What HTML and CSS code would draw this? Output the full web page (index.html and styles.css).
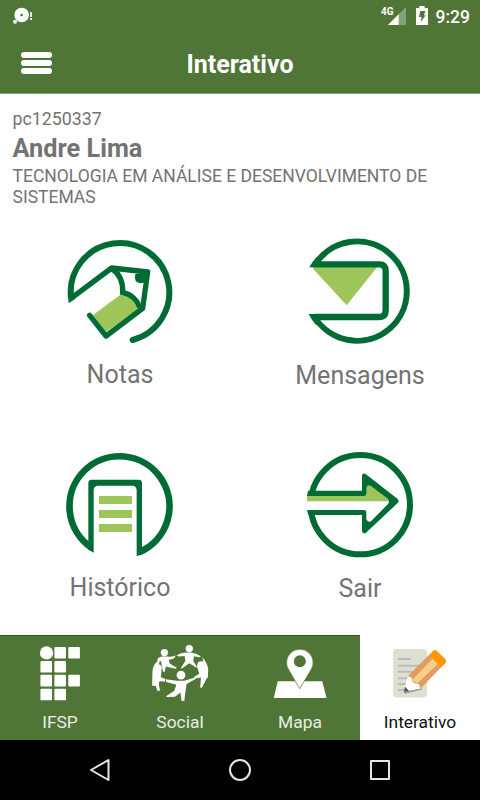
FILE: index.html
```html
<!DOCTYPE html>
<html lang="pt-BR">
<head>
  <meta charset="UTF-8" />
  <meta name="viewport" content="width=device-width, initial-scale=1.0"/>
  <title>Interativo</title>
  <link rel="stylesheet" href="styles.css">
</head>
<body>

  <!-- Status bar -->
  <div class="status-bar">
    <svg class="notification" viewBox="0 0 72 60">
      <circle cx="29" cy="27" r="13" fill="none" stroke="#fff" stroke-width="18"/>
      <circle cx="9" cy="47" r="6" fill="#fff"/>
      <path d="M57 18v15M57 36v6" stroke="#fff" stroke-width="5"/>
    </svg>
    <span class="network">4G</span>
    <svg class="signal" viewBox="0 0 54 54">
      <path d="M54 0V54H0z" fill="#87a176"/>
      <path d="M32 22V54H0z" fill="#fff"/>
    </svg>
    <svg class="battery" viewBox="0 0 36 57">
      <path d="M10 0h16v6h10v51H0V6h10z" fill="#fff"/>
      <path d="M13 15h15l-4 13h5L14 49l3-16H9z" fill="#4f7637"/>
    </svg>
    <span class="clock">9:29</span>
  </div>

  <header class="header">
    <button class="menu-btn" aria-label="Menu"><i></i><i></i><i></i></button>
    <h1>Interativo</h1>
  </header>

  <section class="student">
    <p class="code">pc1250337</p>
    <h2>Andre Lima</h2>
    <p class="course">TECNOLOGIA EM ANÁLISE E DESENVOLVIMENTO DE SISTEMAS</p>
  </section>

  <main class="options">
    <a class="option">
      <svg viewBox="0 0 420 360">
        <path class="light" d="M129 270L213 208Q250 210 266 251L168 320z"/>
        <path class="line" d="M62.500 215A148 148 0 1 1 248 345" stroke-linecap="round"/>
        <path class="line thin" d="M66 218L185 129L293 141L278 250L168 333L119 271" stroke-linecap="round" stroke-linejoin="round"/>
        <path class="line thin" d="M187 132Q220 155 218 202Q256 210 270 248"/>
        <path class="dark" d="M54 205L56 235L76 221L70 198zM256 147Q250 174 272 175L288 172L292 145z"/>
      </svg>
      <span>Notas</span>
    </a>
    <a class="option message">
      <svg viewBox="0 0 420 360">
        <path class="line" d="M74 121A149 149 0 1 1 73 274"/>
        <path class="dark" d="M58 127Q66 111 80 96L94 109L110 127zM56 267H108L92 286L79 301Q65 286 56 267z"/>
        <path d="M93 109Q145 60 204 60A140 140 0 0 1 204 339Q137 335 90 286H268Q297 281 297 256V138Q297 112 268 109z" fill="#fff"/>
        <path class="light" d="M65 127H261L170 241z"/>
        <path class="line thick" d="M72 118H268Q287 118 287 138V256Q287 276 268 276H72"/>
      </svg>
      <span>Mensagens</span>
    </a>
    <a class="option history">
      <svg viewBox="0 0 420 360">
        <path class="line wide" d="M123 322A150 150 0 1 1 269 336"/>
        <path class="dark" d="M115 293V129Q115 119 125 119H266Q276 119 276 129V320L276 344L260 348V151Q260 137 246 137H145Q131 137 131 151V338L115 329z"/>
        <path class="light" d="M147 168h99v24h-99zM147 210h99v24h-99zM147 252h99v24h-99z"/>
      </svg>
      <span>Histórico</span>
    </a>
    <a class="option exit">
      <svg viewBox="0 0 420 360">
        <circle class="line" cx="211" cy="194" r="149"/>
        <path d="M45 167H218L239 140L295 182L237 244L218 211H45z" fill="#fff"/>
        <path class="light" d="M51 165H227V130H240L304 176V184H51z"/>
        <path class="dark" d="M54 152H216V109Q216 98 226 101L322 176Q330 183 322 190L228 278Q216 284 216 270V225H55L51 210H222Q229 210 229 219V238Q235 249 243 244L292 194Q302 184 292 175L242 137Q231 132 229 144V159Q229 168 221 168H51z"/>
      </svg>
      <span>Sair</span>
    </a>
  </main>

  <nav class="tabs">
    <a class="tab">
      <svg viewBox="0 0 360 220">
        <g fill="#fff">
          <circle cx="139.500" cy="51" r="20"/>
          <rect x="163" y="33" width="35" height="35" rx="3"/>
          <rect x="205" y="33" width="35" height="35" rx="3"/>
          <rect x="121" y="75" width="35" height="35" rx="3"/>
          <rect x="163" y="75" width="35" height="35" rx="3"/>
          <rect x="121" y="117" width="35" height="35" rx="3"/>
          <rect x="163" y="117" width="35" height="35" rx="3"/>
          <rect x="205" y="117" width="35" height="35" rx="3"/>
          <rect x="121" y="159" width="35" height="35" rx="3"/>
          <rect x="163" y="159" width="35" height="35" rx="3"/>
        </g>
      </svg>
      <span>IFSP</span>
    </a>
    <a class="tab">
      <svg viewBox="0 0 360 220">
        <g fill="#fff">
          <circle cx="133" cy="50" r="11"/>
          <circle cx="208" cy="38" r="11"/>
          <circle cx="113" cy="97" r="12"/>
          <circle cx="244" cy="88" r="12"/>
          <circle cx="183" cy="118" r="13"/>
          <path d="M114 78L111 72Q115 63 125 62H142Q153 64 167 59L163 66Q152 73 146 71L149 83L170 96L168 99L146 94L137 92L134 108H129L125 89L123 75z"/>
          <path d="M169 59Q184 49 201 50H214Q230 54 243 61L238 64L222 61L220 75L230 91V96L208 82L185 99L183 96L196 75L194 60L177 62z"/>
          <path d="M96 150L97 106Q100 82 114 75L119 79Q110 88 122 97L124 107L122 124L135 129V137L118 136L116 146L120 164L112 166L107 151z"/>
          <path d="M247 64Q261 79 265 98L264 124L259 130L246 156L241 155L243 125L224 128L221 124L238 114L231 90Q246 98 253 88z"/>
          <path d="M136 130L170 135H193L226 125L229 128L200 145L197 163L193 196H185L181 170L165 183L140 184L139 181L163 165L169 147L139 139z"/>
        </g>
      </svg>
      <span>Social</span>
    </a>
    <a class="tab">
      <svg viewBox="0 0 360 220">
        <path d="M113 136H247L260 187H101z" fill="#fff"/>
        <path d="M179 159L146 102A40 40 0 1 1 213 102z" fill="#fff" stroke="#4f7637" stroke-width="2"/>
        <circle cx="179.500" cy="76" r="18" fill="#4f7637"/>
      </svg>
      <span>Mapa</span>
    </a>
    <a class="tab active">
      <svg viewBox="0 0 360 220">
        <rect x="99" y="39" width="102" height="146" rx="10" fill="#dedfd1"/>
        <path d="M116 69h34M116 90h66M116 108h50M116 127h40M116 145h35M116 163h30" stroke="#bbbdb7" stroke-width="6" stroke-linecap="round"/>
        <path d="M131 169L183 157L187 161L134 174z" fill="#999a90"/>
        <path d="M143 121L208 56L245 93L182 158z" fill="#e19c62"/>
        <path d="M156 133L219 67L235 83L170 145z" fill="#f3cf89"/>
        <path d="M156 133L180 157L188 150L170 141z" fill="#e19c62"/>
        <path d="M208 57L219 45Q224 39 231 45L256 69Q262 76 256 82L243 95z" fill="#ff9800"/>
        <path d="M143 121L131 168L182 158L176 145L157 141L154 124z" fill="#fff"/>
        <path d="M135 153L131 169L147 166z" fill="#45556b"/>
      </svg>
      <span>Interativo</span>
    </a>
  </nav>

  <!-- Android navigation -->
  <footer class="system-nav">
    <svg viewBox="0 0 24 26"><path d="M3 13L20.500 3V23z"/></svg>
    <svg viewBox="0 0 24 26"><circle cx="12" cy="13" r="10"/></svg>
    <svg viewBox="0 0 24 26"><path d="M3 4H21V22H3z"/></svg>
  </footer>

</body>
</html>
```

FILE: styles.css
```css
* {
  box-sizing: border-box;
}
body {
  display: flex;
  flex-direction: column;
  width: 480px;
  height: 800px;
  margin: 0;
  background: #fff;
  color: #737373;
  font-family: Roboto, sans-serif;
  overflow: hidden;
}
h1, h2, p {
  margin: 0;
}
svg {
  display: block;
  flex: none;
}
.status-bar {
  display: flex;
  align-items: flex-start;
  height: 36px;
  padding: 6px 10px 0 12px;
  background: #4f7637;
  color: #fff;
}
.notification {
  width: 24px;
  height: 20px;
}
.network {
  margin-left: auto;
  font-size: 10px;
  line-height: 11px;
  font-weight: 700;
}
.signal {
  width: 18px;
  height: 18px;
  margin: 1px 10px 0 -6px;
}
.battery {
  width: 12px;
  height: 19px;
  margin-right: 8px;
}
.clock {
  font-size: 17.5px;
  line-height: 22px;
  font-weight: 500;
}
.header {
  display: grid;
  grid-template-columns: 80px 1fr 80px;
  align-items: center;
  height: 58px;
  background: #4f7637;
  border-bottom: 1px solid #8b9c81;
}
.header h1 {
  color: #fff;
  font-size: 25px;
  line-height: 30px;
  font-weight: 700;
  text-align: center;
}
.menu-btn {
  display: flex;
  flex-direction: column;
  gap: 2px;
  width: 31px;
  margin: 0 0 3px 21px;
  padding: 0;
  border: none;
  background: none;
}
.menu-btn i {
  width: 31px;
  height: 6px;
  border-radius: 3px;
  background: #fff;
}
.student {
  height: 131px;
  padding: 14px 12px 0 12.5px;
  font-size: 17.5px;
  line-height: 21px;
}
.code {
  font-size: 17.8px;
}
.student h2 {
  font-size: 25.3px;
  line-height: 30px;
  font-weight: 700;
  margin: 5px 0 2px;
}
.options {
  display: grid;
  grid-template-columns: 1fr 1fr;
  grid-template-rows: 215px 195px;
  height: 410px;
}
.option {
  display: flex;
  flex-direction: column;
  align-items: center;
}
.option svg {
  width: 140px;
  height: 120px;
}
.option span {
  margin-top: 14px;
  font-size: 25px;
  line-height: 31px;
}
.message span {
  margin-top: 15px;
}
.history span {
  margin-top: 12px;
}
.exit span {
  margin-top: 13px;
}
.line {
  fill: none;
  stroke: #006b35;
  stroke-width: 18;
}
.thin {
  stroke-width: 16;
}
.thick {
  stroke-width: 19;
}
.wide {
  stroke-width: 20;
}
.dark {
  fill: #006b35;
}
.light {
  fill: #9dc559;
}
.tabs {
  display: grid;
  grid-template-columns: repeat(4, 1fr);
  height: 105px;
}
.tab {
  display: flex;
  flex-direction: column;
  align-items: center;
  background: #4f7637;
  border-top: 1px solid #1f6412;
  color: #e9ede6;
  font-size: 17.4px;
  line-height: 22px;
}
.tab svg {
  width: 120px;
  height: 73px;
}
.tab span {
  margin-top: 2px;
}
.tab.active {
  background: #fff;
  border-top-color: #fff;
  color: #111;
}
.system-nav {
  display: flex;
  justify-content: space-between;
  align-items: center;
  height: 60px;
  padding: 0 88px;
  background: #000;
}
.system-nav svg {
  width: 24px;
  height: 26px;
  fill: none;
  stroke: #e5e5e5;
  stroke-width: 2;
  stroke-linejoin: round;
}
```
